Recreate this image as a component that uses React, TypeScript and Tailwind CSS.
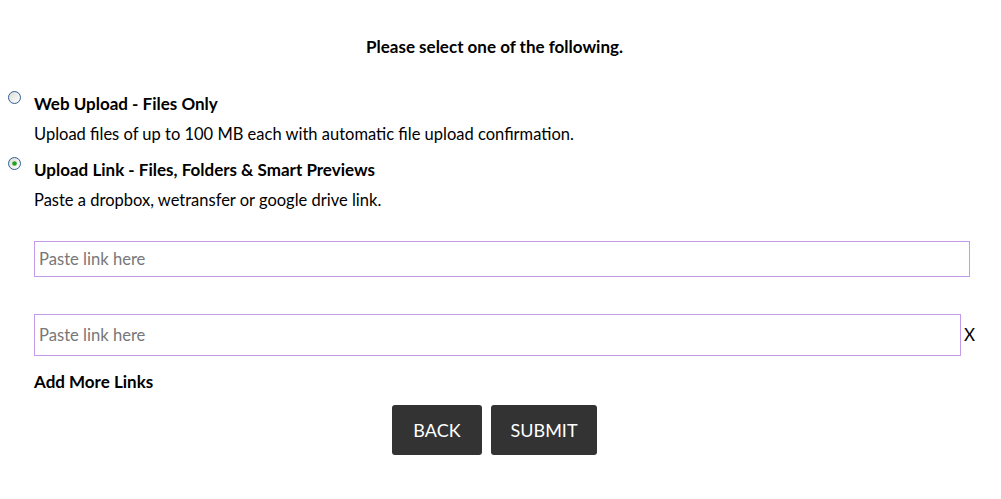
import React from "react";

function Radio({ checked }: { checked?: boolean }) {
  return (
    <svg width="13" height="13" viewBox="0 0 13 13" className="shrink-0">
      <defs>
        <linearGradient id={checked ? "g1" : "g0"} x1="0" y1="0" x2="1" y2="1">
          <stop offset="0" stopColor="#dcdcd5" />
          <stop offset="1" stopColor="#ffffff" />
        </linearGradient>
      </defs>
      <circle cx="6.5" cy="6.5" r="6" fill={`url(#${checked ? "g1" : "g0"})`} stroke="#2f5f92" strokeWidth="1" />
      {checked && <circle cx="6.5" cy="6.5" r="2.3" fill="#21a121" />}
    </svg>
  );
}

export default function App() {
  const font = { fontFamily: "Lato, 'Liberation Sans', sans-serif" };
  return (
    <div className="w-[1001px] h-[499px] bg-white text-black" style={font}>
      <div className="pt-[38px] pr-[12px] text-center text-[17px] font-bold leading-[18px]">
        Please select one of the following.
      </div>
      <div className="pt-[38px] pl-[8px]">
        <div className="flex items-start gap-[13px]">
          <div className="mt-[-3px]"><Radio /></div>
          <div className="text-[17px] font-bold leading-[20px]">Web Upload - Files Only</div>
        </div>
        <div className="pl-[26px] mt-[11px] text-[16.5px] leading-[19px]">
          Upload files of up to 100 MB each with automatic file upload confirmation.
        </div>
        <div className="flex items-start gap-[13px] mt-[16px]">
          <div className="mt-[-3px]"><Radio checked /></div>
          <div className="text-[17px] font-bold leading-[20px]">Upload Link - Files, Folders &amp; Smart Previews</div>
        </div>
        <div className="pl-[26px] mt-[11px] text-[16.5px] leading-[19px]">
          Paste a dropbox, wetransfer or google drive link.
        </div>
      </div>
      <div className="pl-[34px] pt-[31px]">
        <input
          placeholder="Paste link here"
          className="block w-[936px] h-[36px] border border-[#c39be8] px-[4px] text-[16.6px] placeholder:text-[#777] outline-none"
          style={font}
        />
        <div className="flex items-center mt-[37px]">
          <input
            placeholder="Paste link here"
            className="block w-[927px] h-[42px] border border-[#c39be8] px-[4px] text-[16.6px] placeholder:text-[#777] outline-none"
            style={font}
          />
          <span className="ml-[3px] text-[17px]">X</span>
        </div>
        <div className="mt-[16px] text-[17px] font-bold leading-[20px]">Add More Links</div>
      </div>
      <div className="flex justify-center gap-[9px] mt-[13px] pr-[12px]">
        <button className="w-[90px] h-[50px] bg-[#333333] text-white text-[18px] rounded-[3px]" style={font}>
          BACK
        </button>
        <button className="w-[106px] h-[50px] bg-[#333333] text-white text-[18px] rounded-[3px]" style={font}>
          SUBMIT
        </button>
      </div>
    </div>
  );
}
